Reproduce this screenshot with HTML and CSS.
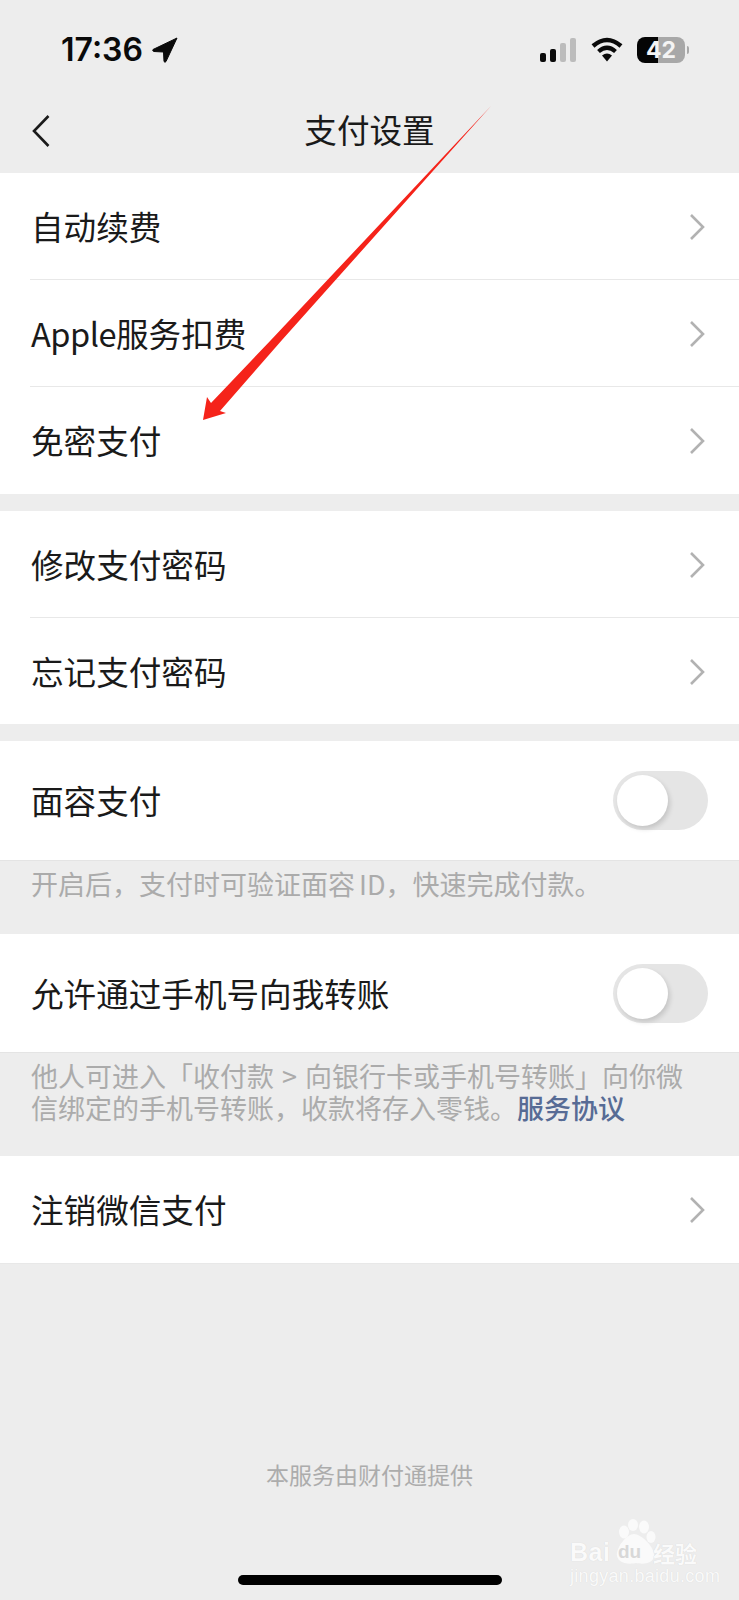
FILE: index.html
```html
<!DOCTYPE html>
<html lang="zh-CN">
<head>
<meta charset="utf-8">
<title>支付设置</title>
<link rel="stylesheet" href="styles.css">
</head>
<body>
<div class="page">
  <header class="status">
    <div class="status-left">
      <span class="clock">17:36</span>
      <svg class="loc" width="26" height="26" viewBox="0 0 26 26"><path d="M25 1 L1 12.5 Q0 14 2 14.5 L11.5 15 L12 24.5 Q13 26 14 24.5 Z" fill="#0a0a0a" stroke="#0a0a0a" stroke-width="1" stroke-linejoin="round"/></svg>
    </div>
    <div class="status-right">
      <div class="signal"><i class="b1"></i><i class="b2"></i><i class="b3"></i><i class="b4"></i></div>
      <svg class="wifi" width="32" height="25" viewBox="0 0 32 25"><path d="M2 9 Q16 -3 30 9" fill="none" stroke="#0a0a0a" stroke-width="4.4"/><path d="M7.5 14.5 Q16 7 24.5 14.5" fill="none" stroke="#0a0a0a" stroke-width="4.2"/><path d="M11 18.5 Q16 14.5 21 18.5 L16 24.5 Z" fill="#0a0a0a"/></svg>
      <div class="battery"><span class="level">42</span></div>
      <i class="nub"></i>
    </div>
  </header>
  <nav class="navbar">
    <svg class="back" width="18" height="32" viewBox="0 0 18 32"><path d="M16.5 1 L2 16 L16.5 31" fill="none" stroke="#1a1a1a" stroke-width="2.6"/></svg>
    <h1 class="title">支付设置</h1>
  </nav>
  <main>
    <section class="group g1">
      <div class="row sep"><span>自动续费</span><svg class="chev" width="16" height="26" viewBox="0 0 16 26"><path d="M2 1 L14 13 L2 25" fill="none" stroke="#b2b2b2" stroke-width="2.6"/></svg></div>
      <div class="row sep"><span><b class="latin">Apple</b>服务扣费</span><svg class="chev" width="16" height="26" viewBox="0 0 16 26"><path d="M2 1 L14 13 L2 25" fill="none" stroke="#b2b2b2" stroke-width="2.6"/></svg></div>
      <div class="row"><span>免密支付</span><svg class="chev" width="16" height="26" viewBox="0 0 16 26"><path d="M2 1 L14 13 L2 25" fill="none" stroke="#b2b2b2" stroke-width="2.6"/></svg></div>
    </section>
    <section class="group g2">
      <div class="row sep"><span>修改支付密码</span><svg class="chev" width="16" height="26" viewBox="0 0 16 26"><path d="M2 1 L14 13 L2 25" fill="none" stroke="#b2b2b2" stroke-width="2.6"/></svg></div>
      <div class="row"><span>忘记支付密码</span><svg class="chev" width="16" height="26" viewBox="0 0 16 26"><path d="M2 1 L14 13 L2 25" fill="none" stroke="#b2b2b2" stroke-width="2.6"/></svg></div>
    </section>
    <section class="group g3">
      <div class="row tall"><span>面容支付</span><div class="switch"><i class="knob"></i></div></div>
    </section>
    <p class="hint h1">开启后，支付时可验证面容 ID，快速完成付款。</p>
    <section class="group g4">
      <div class="row tall"><span>允许通过手机号向我转账</span><div class="switch"><i class="knob"></i></div></div>
    </section>
    <p class="hint h2">他人可进入「收付款 &gt; 向银行卡或手机号转账」向你微信绑定的手机号转账，收款将存入零钱。<a class="link">服务协议</a></p>
    <section class="group g5">
      <div class="row"><span>注销微信支付</span><svg class="chev" width="16" height="26" viewBox="0 0 16 26"><path d="M2 1 L14 13 L2 25" fill="none" stroke="#b2b2b2" stroke-width="2.6"/></svg></div>
    </section>
  </main>
  <footer class="foot">本服务由财付通提供</footer>
  <div class="home"></div>
  <div class="mark">
    <svg class="paw" width="44" height="46" viewBox="0 0 44 46"><g fill="#fafafa"><ellipse cx="11" cy="13" rx="5" ry="6.5"/><ellipse cx="20" cy="6" rx="5" ry="6"/><ellipse cx="31" cy="8" rx="5" ry="6.5"/><ellipse cx="38" cy="18" rx="4.5" ry="6"/><path d="M21 15 C28 15 42 28 41 37 C40 46 28 45 23 44 C18 45 6 46 4 37 C3 28 14 15 21 15 Z"/></g></svg>
    <div class="mark-line"><span class="mark-bai">Bai</span><span class="mark-du">du</span><span class="mark-jy">经验</span></div>
    <div class="mark-url">jingyan.baidu.com</div>
  </div>
  <svg class="arrow" width="739" height="450" viewBox="0 0 739 450"><path d="M491 106 L282 340 L220 411 L226 413 L203 420 L207 397 L211 403 L271 340 Z" fill="#f5231a"/></svg>
</div>
</body>
</html>
```
FILE: styles.css
```css
* { box-sizing: border-box; margin: 0; padding: 0; }
html, body { background: #ededed; }
body { font-family: "Noto Sans CJK SC", "Noto Sans", sans-serif; color: #1a1a1a; }
.page { position: relative; width: 739px; height: 1600px; overflow: hidden; background: #ededed; display: flex; flex-direction: column; }

.status { height: 92px; padding: 37px 50px 0 61px; display: flex; justify-content: space-between; align-items: flex-start; }
.status-left { display: flex; align-items: center; height: 25px; gap: 9px; }
.clock { font-family: Inter, "Liberation Sans", sans-serif; font-size: 32px; font-weight: 600; line-height: 25px; color: #0a0a0a; }
.status-right { display: flex; align-items: center; height: 25px; }
.signal { display: flex; align-items: flex-end; gap: 4px; height: 25px; width: 37px; }
.signal i { display: block; width: 6px; border-radius: 2px; background: #0a0a0a; }
.signal .b1 { height: 9px; }
.signal .b2 { height: 13px; }
.signal .b3 { height: 19px; background: #bcbcbc; }
.signal .b4 { height: 24px; background: #bcbcbc; }
.wifi { margin-left: 14px; }
.battery { margin-left: 14px; width: 48px; height: 26px; border-radius: 8px; background: linear-gradient(90deg, #050505 0 44%, #a8a8a8 44% 100%); display: flex; align-items: center; justify-content: center; }
.level { font-family: Inter, "Liberation Sans", sans-serif; font-size: 23px; font-weight: 700; color: #f4f4f4; line-height: 26px; }
.nub { display: block; width: 2px; height: 8px; margin-left: 2px; background: #a8a8a8; border-radius: 0 2px 2px 0; }

.navbar { height: 81px; display: flex; align-items: center; justify-content: center; position: relative; padding-bottom: 8px; }
.back { position: absolute; left: 32px; top: 23px; }
.title { font-size: 32.6px; font-weight: 400; line-height: 44px; color: #1a1a1a; }

.group { background: #fff; }
.row { height: 107px; padding: 0 34px 0 31px; display: flex; align-items: center; justify-content: space-between; font-size: 32.6px; line-height: 44px; position: relative; }
.row span { padding-bottom: 2px; }
.row.sep::after { content: ""; position: absolute; left: 30px; right: 0; bottom: 0; height: 1px; background: #e8e8e8; }
.row.tall { height: 119px; padding-right: 31px; }
.latin { font-weight: 400; letter-spacing: -.5px; }
.chev { display: block; }
.g1 { margin-bottom: 17px; }
.g2 { margin-bottom: 17px; height: 213px; }
.g3, .g4 { border-bottom: 1px solid #e4e4e4; height: 120px; }
.g4 { height: 119px; }
.g5 { border-bottom: 1px solid #e8e8e8; }
.switch { width: 95px; height: 59px; border-radius: 30px; background: #e5e5e5; padding: 4px; }
.knob { display: block; width: 51px; height: 51px; border-radius: 50%; background: #fff; box-shadow: 2px 3px 5px rgba(0,0,0,.14); }

.hint { font-size: 27px; line-height: 32px; color: #ababab; padding: 7px 40px 0 31px; }
.h1 { height: 73px; word-spacing: -2px; }
.h2 { height: 103px; word-spacing: 2px; }
.link { display: inline-block; color: #576b95; font-weight: 500; }

.foot { position: absolute; left: 0; right: 0; top: 1459px; text-align: center; font-size: 23px; line-height: 30px; color: #acacac; }
.home { position: absolute; left: 238px; top: 1575px; width: 264px; height: 10px; border-radius: 5px; background: #000; }

.mark { position: absolute; left: 570px; top: 1519px; width: 130px; height: 66px; color: #fafafa; }
.paw { position: absolute; left: 43px; top: 0; }
.mark-line { position: absolute; left: 0; top: 18px; width: 130px; height: 30px; display: flex; align-items: center; font-family: "Liberation Sans", sans-serif; text-shadow: 0 0 1px rgba(0,0,0,.12); }
.mark-bai { font-size: 25px; font-weight: 700; line-height: 30px; width: 48px; letter-spacing: .5px; }
.mark-du { font-size: 19px; font-weight: 700; color: #d8d8d8; line-height: 30px; width: 35px; text-shadow: none; }
.mark-jy { font-family: "Noto Sans CJK SC", sans-serif; font-size: 22px; font-weight: 700; line-height: 30px; }
.mark-url { position: absolute; left: 0; top: 47px; font-family: "Liberation Sans", sans-serif; font-size: 18px; line-height: 20px; letter-spacing: .3px; text-shadow: 0 0 1px rgba(0,0,0,.1); }

.arrow { position: absolute; left: 0; top: 0; pointer-events: none; }
```
